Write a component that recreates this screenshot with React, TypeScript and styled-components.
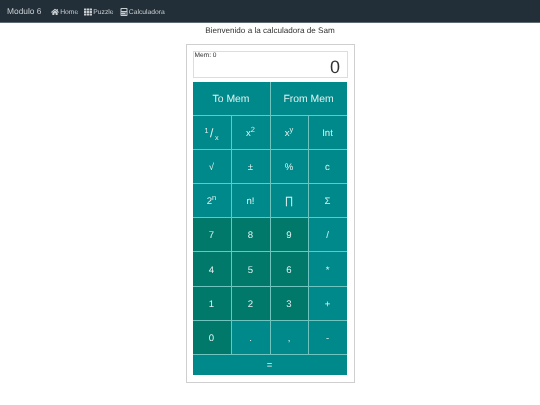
import { createGlobalStyle } from "styled-components";
import styled from "styled-components";
import { FaCalculator, FaHome, FaTh } from "react-icons/fa";

const GlobalStyle = createGlobalStyle`
  html, body {
    margin: 0;
    padding: 0;
    background: #fff;
    font-family: "Liberation Sans", Arial, sans-serif;
    text-rendering: geometricPrecision;
  }
  * {
    box-sizing: border-box;
  }
`;

const rows = [
  ["7", "8", "9", "/"],
  ["4", "5", "6", "*"],
  ["1", "2", "3", "+"],
  ["0", ".", ",", "-"],
];

export default function App() {
  return (
    <Page>
      <GlobalStyle />
      <Navbar>
        <Brand>Modulo 6</Brand>
        <NavLink>
          <FaHome size={8} />
          Home
        </NavLink>
        <NavLink>
          <FaTh size={8} />
          Puzzle
        </NavLink>
        <NavLink>
          <FaCalculator size={8} />
          Calculadora
        </NavLink>
      </Navbar>
      <Title>Bienvenido a la calculadora de Sam</Title>
      <Card>
        <Display>
          <MemLabel>Mem: 0</MemLabel>
          <Value>0</Value>
        </Display>
        <Keys>
          <Key $span={2} $big>
            To Mem
          </Key>
          <Key $span={2} $big>
            From Mem
          </Key>
          <Key>
            <Fraction>
              <sup>1</sup>
              <Slash>/</Slash>
              <sub>x</sub>
            </Fraction>
          </Key>
          <Key>
            <span>
              x<Sup>2</Sup>
            </span>
          </Key>
          <Key>
            <span>
              x<Sup>y</Sup>
            </span>
          </Key>
          <Key>Int</Key>
          <Key>√</Key>
          <Key>±</Key>
          <Key>%</Key>
          <Key>c</Key>
          <Key>
            <span>
              2<Sup>n</Sup>
            </span>
          </Key>
          <Key>n!</Key>
          <Key $big>∏</Key>
          <Key>Σ</Key>
          {rows.map((row) =>
            row.map((label) => (
              <Key key={label} $digit={/[0-9]/.test(label)}>
                {label}
              </Key>
            )),
          )}
          <EqualsKey>=</EqualsKey>
        </Keys>
      </Card>
    </Page>
  );
}

const Page = styled.div`
  width: 540px;
  height: 405px;
  overflow: hidden;
  display: flex;
  flex-direction: column;
  align-items: center;
  will-change: transform;
`;

const Navbar = styled.nav`
  width: 100%;
  height: 23px;
  flex: none;
  display: flex;
  align-items: center;
  padding-left: 7px;
  background: #222f38;
  border-bottom: 1px solid #5d6b70;
`;

const Brand = styled.span`
  font-size: 8.4px;
  color: #c8cdd0;
  margin-right: 9.7px;
`;

const NavLink = styled.a`
  display: flex;
  align-items: center;
  gap: 1px;
  padding-top: 2px;
  font-size: 6.75px;
  color: #c8cdd0;
  margin-right: 6.2px;

  svg {
    margin-top: -1px;
  }
`;

const Title = styled.h1`
  margin: 2px 0 0;
  height: 19px;
  font-size: 8.15px;
  line-height: 11px;
  font-weight: 400;
  color: #333;
`;

const Card = styled.main`
  width: 169px;
  height: 339px;
  padding: 6px;
  border: 1.5px solid #cfcfcf;
  display: flex;
  flex-direction: column;
  gap: 3.5px;
`;

const Display = styled.div`
  height: 27px;
  padding: 1px;
  flex: none;
  border: 1px solid #ddd;
  position: relative;
  color: #333;
`;

const MemLabel = styled.div`
  font-size: 6.6px;
  line-height: 6px;
`;

const Value = styled.div`
  position: absolute;
  right: 6.5px;
  bottom: -1px;
  font-size: 18px;
  line-height: 21px;
`;

const Keys = styled.div`
  display: grid;
  grid-template-columns: 39px 39px 38px 38px;
  grid-template-rows: repeat(8, 34.2px) 20px;
  width: 154px;
`;

const Key = styled.button<{ $span?: number; $big?: boolean; $digit?: boolean }>`
  grid-column: span ${(p) => p.$span ?? 1};
  padding: 2px 0 0;
  border: 0;
  border-right: 1px solid #6fc4c0;
  border-bottom: 1px solid #6fc4c0;
  background: ${(p) => (p.$digit ? "#00796b" : "#00898a")};
  color: #e0f0ef;
  font-family: inherit;
  font-size: ${(p) => (p.$big ? "10.4px" : "9.6px")};
  display: flex;
  align-items: center;
  justify-content: center;
  text-rendering: geometricPrecision;

  &:nth-child(2),
  &:nth-child(4n + 2):nth-child(n + 6) {
    border-right: 0;
  }
`;

const EqualsKey = styled.button`
  grid-column: 1 / -1;
  padding: 0;
  border: 0;
  background: #00898a;
  color: #e0f0ef;
  font-family: inherit;
  font-size: 9.6px;
  text-rendering: geometricPrecision;
`;

const Sup = styled.sup`
  font-size: 7.5px;
  line-height: 0;
  vertical-align: 3.7px;
`;

const Fraction = styled.span`
  font-size: 9.6px;

  sup,
  sub {
    font-size: 7.2px;
    line-height: 0;
  }
`;

const Slash = styled.span`
  font-size: 12px;
  margin: 0 1.5px;
`;
